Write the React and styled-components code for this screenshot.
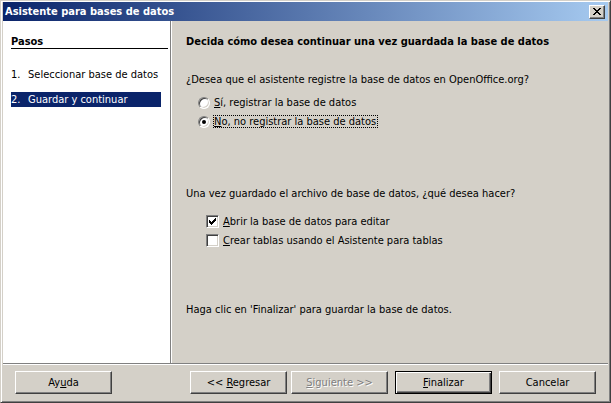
import React from "react";
import styled, { createGlobalStyle, css } from "styled-components";

const Global = createGlobalStyle`
  html, body { margin: 0; padding: 0; background: #d4d0c8; }
  body { font-family: "DejaVu Sans Condensed", "Liberation Sans", Arial, sans-serif; font-size: 11px; color: #000; }
  * { box-sizing: border-box; }
`;

const Window = styled.div`
  width: 611px;
  height: 403px;
  display: flex;
  flex-direction: column;
  background: #d4d0c8;
  border: 1px solid;
  border-color: #d4d0c8 #404040 #404040 #d4d0c8;
  box-shadow: inset 1px 1px #fff, inset -1px -1px #808080;
  padding: 1px 2px 2px 2px;
`;

const TitleBar = styled.div`
  height: 19px;
  flex: none;
  display: flex;
  align-items: center;
  padding: 0 3px 0 2px;
  background: linear-gradient(to right, #0a246a, #a6caf0);
`;

const TitleText = styled.span`
  color: #fff;
  font-weight: bold;
  font-size: 11px;
  line-height: 13px;
`;

const CloseButton = styled.span`
  margin-left: auto;
  width: 16px;
  height: 14px;
  display: flex;
  align-items: center;
  justify-content: center;
  background: #d4d0c8;
  border: 1px solid;
  border-color: #fff #404040 #404040 #fff;
  box-shadow: inset -1px -1px #808080;
  padding-bottom: 1px;
  padding-right: 1px;
`;

const Body = styled.div`
  flex: 1;
  display: flex;
  min-height: 0;
`;

const StepsPanel = styled.div`
  width: 168px;
  flex: none;
  background: #fff;
  border-right: 1px solid #808080;
  padding: 14px 2px 0 8px;
`;

const StepsHeader = styled.div`
  font-weight: bold;
  line-height: 13px;
  height: 14px;
  border-bottom: 1px solid #000;
`;

const StepList = styled.div`
  margin-top: 18px;
  display: flex;
  flex-direction: column;
  gap: 10px;
`;

const Step = styled.div`
  width: 150px;
  height: 15px;
  line-height: 15px;
  display: flex;
  white-space: nowrap;
  ${(p) =>
    p.active &&
    css`
      background: #0a246a;
      color: #fff;
    `}
`;

const StepNum = styled.span`
  width: 17px;
  flex: none;
`;

const Content = styled.div`
  flex: 1;
  display: flex;
  flex-direction: column;
  box-shadow: inset 1px 0 #fff;
  padding: 14px 10px 0 15px;
`;

const Heading = styled.div`
  font-weight: bold;
  line-height: 13px;
`;

const Para = styled.div`
  line-height: 13px;
  margin-top: ${(p) => p.gap}px;
  white-space: nowrap;
`;

const OptionGroup = styled.div`
  margin-top: ${(p) => p.gap}px;
  padding-left: ${(p) => p.indent}px;
  display: flex;
  flex-direction: column;
`;

const OptionRow = styled.div`
  height: 19px;
  display: flex;
  align-items: center;
  gap: 4px;
  white-space: nowrap;
`;

const Radio = styled.span`
  position: relative;
  flex: none;
  width: 12px;
  height: 12px;
  border-radius: 50%;
  background: #fff;
  border: 1px solid;
  border-color: #808080 #fff #fff #808080;
  box-shadow: inset 1px 1px #404040, inset -1px -1px #d4d0c8;
  ${(p) =>
    p.checked &&
    css`
      &::after {
        content: "";
        position: absolute;
        left: 3px;
        top: 3px;
        width: 4px;
        height: 4px;
        border-radius: 50%;
        background: #000;
      }
    `}
`;

const Checkbox = styled.span`
  position: relative;
  flex: none;
  width: 13px;
  height: 13px;
  background: #fff;
  border: 1px solid;
  border-color: #808080 #fff #fff #808080;
  box-shadow: inset 1px 1px #404040, inset -1px -1px #d4d0c8;
  display: flex;
  align-items: center;
  justify-content: center;
`;

const Label = styled.span`
  line-height: 13px;
  ${(p) =>
    p.focused &&
    css`
      border: 1px dotted #000;
      line-height: 11px;
      margin-left: -1px;
      padding-right: 1px;
    `}
`;

const Separator = styled.div`
  flex: none;
  height: 2px;
  border-top: 1px solid #808080;
  border-bottom: 1px solid #fff;
`;

const Footer = styled.div`
  flex: none;
  height: 35px;
  display: flex;
  align-items: center;
  padding: 0 12px;
`;

const ButtonGroup = styled.div`
  margin-left: auto;
  display: flex;
  align-items: center;
`;

const Button = styled.div`
  width: 97px;
  height: 23px;
  margin-left: ${(p) => p.gap || 0}px;
  display: flex;
  align-items: center;
  justify-content: center;
  background: #d4d0c8;
  border: 1px solid;
  border-color: #fff #404040 #404040 #fff;
  box-shadow: inset -1px -1px #808080;
  white-space: pre;
  line-height: 13px;
  ${(p) =>
    p.isDefault &&
    css`
      border-color: #000;
      box-shadow: inset 1px 1px #fff, inset -1px -1px #404040, inset -2px -2px #808080;
    `}
  ${(p) =>
    p.disabled &&
    css`
      color: #808080;
      text-shadow: 1px 1px #fff;
    `}
`;

const ButtonLabel = styled.span`
  white-space: pre;
`;

const Pixels = ({ rows, w, h }) => (
  <svg width={w} height={h} viewBox={`0 0 ${w} ${h}`} shapeRendering="crispEdges">
    {rows.map((segs, y) =>
      segs.map(([a, b], i) => (
        <rect key={`${y}-${i}`} x={a} y={y} width={b - a + 1} height={1} fill="#000" />
      ))
    )}
  </svg>
);

const closeRows = [
  [[0, 1], [6, 7]],
  [[1, 2], [5, 6]],
  [[2, 5]],
  [[3, 4]],
  [[2, 5]],
  [[1, 2], [5, 6]],
  [[0, 1], [6, 7]],
];

const checkRows = [
  [[6, 6]],
  [[5, 6]],
  [[0, 0], [4, 6]],
  [[0, 1], [3, 5]],
  [[0, 4]],
  [[1, 3]],
  [[2, 2]],
];

export default function App() {
  return (
    <>
      <Global />
      <Window>
        <TitleBar>
          <TitleText>Asistente para bases de datos</TitleText>
          <CloseButton>
            <Pixels rows={closeRows} w={8} h={7} />
          </CloseButton>
        </TitleBar>
        <Body>
          <StepsPanel>
            <StepsHeader>Pasos</StepsHeader>
            <StepList>
              <Step>
                <StepNum>1.</StepNum>Seleccionar base de datos
              </Step>
              <Step active>
                <StepNum>2.</StepNum>Guardar y continuar
              </Step>
            </StepList>
          </StepsPanel>
          <Content>
            <Heading>Decida cómo desea continuar una vez guardada la base de datos</Heading>
            <Para gap={25}>¿Desea que el asistente registre la base de datos en OpenOffice.org?</Para>
            <OptionGroup gap={7} indent={12}>
              <OptionRow>
                <Radio />
                <Label>
                  <u>S</u>í, registrar la base de datos
                </Label>
              </OptionRow>
              <OptionRow>
                <Radio checked />
                <Label focused>
                  <u>N</u>o, no registrar la base de datos
                </Label>
              </OptionRow>
            </OptionGroup>
            <Para gap={56}>Una vez guardado el archivo de base de datos, ¿qué desea hacer?</Para>
            <OptionGroup gap={12} indent={20}>
              <OptionRow>
                <Checkbox>
                  <Pixels rows={checkRows} w={7} h={7} />
                </Checkbox>
                <Label>
                  <u>A</u>brir la base de datos para editar
                </Label>
              </OptionRow>
              <OptionRow>
                <Checkbox />
                <Label>
                  <u>C</u>rear tablas usando el Asistente para tablas
                </Label>
              </OptionRow>
            </OptionGroup>
            <Para gap={53}>Haga clic en 'Finalizar' para guardar la base de datos.</Para>
          </Content>
        </Body>
        <Separator />
        <Footer>
          <Button>
            <ButtonLabel>
              Ay<u>u</u>da
            </ButtonLabel>
          </Button>
          <ButtonGroup>
            <Button>
              <ButtonLabel>
                {"<< "}
                <u>R</u>egresar
              </ButtonLabel>
            </Button>
            <Button gap={4} disabled>
              <ButtonLabel>
                <u>S</u>iguiente {">>"}
              </ButtonLabel>
            </Button>
            <Button gap={7} isDefault>
              <ButtonLabel>
                <u>F</u>inalizar
              </ButtonLabel>
            </Button>
            <Button gap={7}>
              <ButtonLabel>Cancelar</ButtonLabel>
            </Button>
          </ButtonGroup>
        </Footer>
      </Window>
    </>
  );
}
